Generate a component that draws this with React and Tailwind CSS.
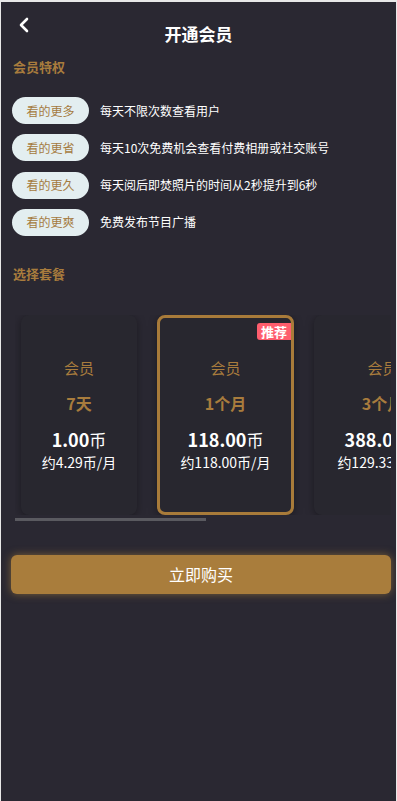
const FONT = { fontFamily: '"Noto Sans CJK SC", "Noto Sans", sans-serif' };

const PERKS = [
  { tag: '看的更多', text: '每天不限次数查看用户' },
  { tag: '看的更省', text: '每天10次免费机会查看付费相册或社交账号' },
  { tag: '看的更久', text: '每天阅后即焚照片的时间从2秒提升到6秒' },
  { tag: '看的更爽', text: '免费发布节目广播' },
];

const PLANS = [
  { name: '会员', term: '7天', price: '1.00', per: '约4.29币/月', w: 'w-[116px]' },
  { name: '会员', term: '1个月', price: '118.00', per: '约118.00币/月', w: 'w-[137px]', hot: true },
  { name: '会员', term: '3个月', price: '388.00', per: '约129.33币/月', w: 'w-[137px]' },
];

export default function App() {
  return (
    <div style={FONT} className="w-[397px] h-[801px] bg-[#2a2832] border-t-2 border-x border-[#e8e8e8] overflow-hidden">
      {/* Header */}
      <div className="flex px-[16px] pt-[15px]">
        <div className="w-[40px]">
          <svg width="14" height="16" viewBox="0 0 14 16" className="ml-[1px]">
            <path d="M9 2 L3 8 L9 14" fill="none" stroke="#fff" strokeWidth="2.6" strokeLinecap="round" strokeLinejoin="round" />
          </svg>
        </div>
        <h1 className="flex-1 text-center text-white text-[17px] leading-[20px] font-bold mt-[7px]">开通会员</h1>
        <div className="w-[40px]" />
      </div>

      {/* Perks */}
      <div className="px-[11px] mt-[13px]">
        <h2 className="pl-[1px] text-[#a87c3d] text-[13px] leading-[20px] font-bold">会员特权</h2>
        <div className="mt-[20px] flex flex-col gap-[10.3px]">
          {PERKS.map(p => (
            <div key={p.tag} className="flex items-center">
              <span className="w-[77px] h-[27px] rounded-full bg-[#e3eef0] text-[#a57b3f] text-[12px] flex items-center justify-center">{p.tag}</span>
              <span className="ml-[11px] text-white text-[12px]">{p.text}</span>
            </div>
          ))}
        </div>
        <h2 className="pl-[1px] mt-[28px] text-[#a87c3d] text-[13px] leading-[20px] font-bold">选择套餐</h2>
      </div>

      {/* Plans */}
      <div className="ml-[14px] w-[376px] mt-[31px] overflow-hidden">
        <div className="flex gap-[20px] pl-[6px]">
          {PLANS.map(p => (
            <div
              key={p.term}
              className={`${p.w} h-[200px] shrink-0 relative rounded-[8px] bg-[#28272f] shadow-[0_2px_8px_rgba(0,0,0,0.35)] flex flex-col items-center justify-center ${p.hot ? 'border-[3px] border-[#a87b3a]' : ''}`}
            >
              {p.hot && (
                <span className="absolute top-[5px] right-0 bg-[#fe5d6d] text-white text-[13px] leading-[17px] font-bold px-[4px] rounded-l-[3px]">推荐</span>
              )}
              <div className="text-[#a87c3d] text-[15px] leading-[20px]">{p.name}</div>
              <div className="mt-[14px] text-[#a87c3d] text-[16px] leading-[22px] font-bold">{p.term}</div>
              <div className="mt-[13px] text-white leading-[24px] whitespace-nowrap">
                <span className="text-[18px] font-bold">{p.price}</span>
                <span className="text-[17px]">币</span>
              </div>
              <div className="text-white text-[14px] leading-[20px] whitespace-nowrap">{p.per}</div>
            </div>
          ))}
        </div>
      </div>
      <div className="ml-[14px] mt-[3px] w-[191px] h-[3px] bg-[#5a5a60]" />

      {/* Buy button */}
      <button className="ml-[10px] mt-[34px] w-[380px] h-[39px] rounded-[6px] bg-[#a97d3c] shadow-[0_0_8px_rgba(190,140,60,0.55)] text-white text-[16px]">
        立即购买
      </button>
    </div>
  );
}
